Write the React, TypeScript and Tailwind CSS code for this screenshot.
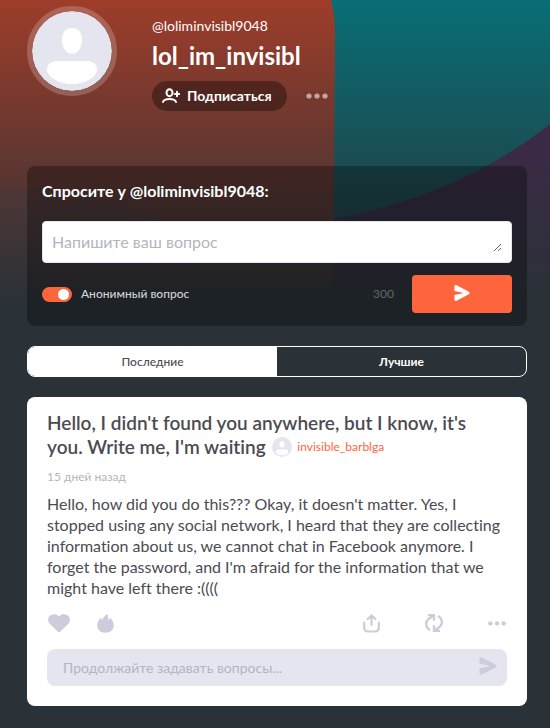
import React, { useState } from "react";

function Avatar({ className }: { className: string }) {
  return (
    <svg viewBox="0 0 80 80" className={className} aria-hidden="true">
      <circle cx="40" cy="40" r="40" fill="#e5e5ef" />
      <path
        d="M40 17c6.500 0 10 4.500 10 12 0 8-5 14-10 14s-10-6-10-14c0-7.500 3.500-12 10-12Z"
        fill="#fff"
      />
      <path
        d="M25 50h30c6 0 10 4 10 8.500C65 66 53 73 40 73S15 66 15 58.500C15 54 19 50 25 50Z"
        fill="#fff"
      />
    </svg>
  );
}

function PlaneIcon({ className }: { className: string }) {
  return (
    <svg viewBox="0 0 18 18" className={className} aria-hidden="true" fill="currentColor">
      <path d="M3 .4 16.300 7.400c1.700.9 1.700 2.300 0 3.200L3 17.600C1.500 18.300.5 17.600.5 16.200v-4.900L10 9.400v-.8L.5 6.700V1.800C.5.400 1.500-.300 3 .4Z" />
    </svg>
  );
}

function Dots({ className }: { className: string }) {
  return (
    <svg viewBox="0 0 22 6" className={className} aria-hidden="true" fill="currentColor">
      <circle cx="3" cy="3" r="2.600" />
      <circle cx="11" cy="3" r="2.600" />
      <circle cx="19" cy="3" r="2.600" />
    </svg>
  );
}

function Backdrop() {
  return (
    <svg
      viewBox="0 0 550 300"
      preserveAspectRatio="none"
      className="absolute inset-x-0 top-0 -z-10 h-[300px] w-full"
      aria-hidden="true"
    >
      <defs>
        <linearGradient id="fade" x1="0" y1="0" x2="0" y2="1">
          <stop offset="0" stopColor="#2a3137" stopOpacity="0" />
          <stop offset="1" stopColor="#2a3137" />
        </linearGradient>
      </defs>
      <rect width="550" height="300" fill="#4a2352" />
      <path d="M325 0h225v124C490 172 410 207 325 220Z" fill="#096e75" />
      <path d="M0 0h331q4 15 4 34L333 300H0Z" fill="#9e3d2a" />
      <path d="M0 187C70 187 140 200 200 245V300H0Z" fill="#6b4a4c" fillOpacity="0.3" />
      <rect width="550" height="300" fill="url(#fade)" />
    </svg>
  );
}

export default function App() {
  const [tab, setTab] = useState("latest");
  const tabOn = "bg-white text-[#4b4b52] font-medium";
  const tabOff = "text-white font-bold";
  return (
    <div className="relative isolate min-h-screen bg-[#2a3137] pr-[23px] pb-[22px] pl-[27px] pt-1.5 font-['Lato','Noto_Sans',sans-serif] [font-variant-ligatures:none]">
      <Backdrop />
      <header className="flex h-40 items-start gap-[35px]">
        <Avatar className="size-[90px] rounded-full border-5 border-white/20" />
        <div className="pt-3">
          <p className="text-sm leading-4 text-white">@loliminvisibl9048</p>
          <h1 className="mt-2 text-2xl leading-7 font-bold text-white">lol_im_invisibl</h1>
          <div className="mt-[11px] flex items-center gap-[19px]">
            <button className="flex h-[30px] items-center gap-[7px] rounded-full bg-black/35 pr-[15px] pl-2.5 text-sm font-bold text-white">
              <svg
                viewBox="0 0 18 16"
                className="h-4 w-[18px]"
                fill="none"
                stroke="currentColor"
                strokeWidth="2"
                strokeLinecap="round"
                aria-hidden="true"
              >
                <ellipse cx="7.500" cy="4.700" rx="3" ry="3.500" />
                <path d="M1 14c.8-2.200 3-3 6.500-3s5.700.8 6.500 3M12.800 6h4.400M15 3.800v4.400" />
              </svg>
              Подписаться
            </button>
            <button aria-label="Ещё" className="text-white/55">
              <Dots className="h-1.5 w-[22px]" />
            </button>
          </div>
        </div>
      </header>

      <main>
        <form
          className="rounded-lg bg-black/30 px-[15px] pt-[15px] pb-[13px]"
          onSubmit={(e) => e.preventDefault()}
        >
          <label htmlFor="question" className="block text-base leading-5 font-bold text-white">
            Спросите у @loliminvisibl9048:
          </label>
          <div className="mt-5 rounded border border-[#e5e5ef] bg-white px-[9px] py-2.5">
            <textarea
              id="question"
              rows={1}
              placeholder="Напишите ваш вопрос"
              className="block h-5 w-full resize-y overflow-hidden bg-white text-base leading-5 text-[#4b4b52] outline-none placeholder:text-[#b4b4be]"
            />
          </div>
          <div className="mt-3 flex items-center">
            <label className="flex items-center gap-[9px] text-xs font-medium text-[#d0d2d3]">
              <input type="checkbox" defaultChecked className="peer sr-only" />
              <span className="flex h-[15px] w-[30px] items-center rounded-full bg-gray-500 px-[3px] peer-checked:justify-end peer-checked:bg-[#ff653c]">
                <span className="size-[11px] rounded-full bg-white" />
              </span>
              Анонимный вопрос
            </label>
            <span className="mr-[18px] ml-auto text-xs text-[#636769]">300</span>
            <button
              aria-label="Отправить"
              className="flex h-[38px] w-[100px] items-center justify-center rounded bg-[#ff653c] pb-0.5 text-white"
            >
              <PlaneIcon className="size-4" />
            </button>
          </div>
        </form>

        <div role="tablist" className="mt-5 flex h-[31px] overflow-hidden rounded-lg border border-white text-xs">
          <button
            role="tab"
            aria-selected={tab === "latest"}
            onClick={() => setTab("latest")}
            className={`flex-1 ${tab === "latest" ? tabOn : tabOff}`}
          >
            Последние
          </button>
          <button
            role="tab"
            aria-selected={tab === "best"}
            onClick={() => setTab("best")}
            className={`flex-1 ${tab === "best" ? tabOn : tabOff}`}
          >
            Лучшие
          </button>
        </div>

        <article className="mt-5 rounded-lg bg-white px-5 pt-3.5 pb-5 text-[#4b4b52]">
          <h2 className="pr-6 text-[19px] leading-6 font-semibold">
            Hello, I didn't found you anywhere, but I know, it's you. Write me, I'm waiting{" "}
            <a
              href="#author"
              className="ml-0.5 inline-flex h-6 items-center gap-[5px] align-bottom text-xs font-normal text-[#ff653c]"
            >
              <Avatar className="size-5" />
              invisible_barblga
            </a>
          </h2>
          <time className="mt-2.5 block text-xs leading-4 text-[#b4b4be]">15 дней назад</time>
          <p className="mt-2 text-base leading-[21px]">
            Hello, how did you do this??? Okay, it doesn't matter. Yes, I stopped using any social network, I
            heard that they are collecting information about us, we cannot chat in Facebook anymore. I forget
            the password, and I'm afraid for the information that we might have left there :((((
          </p>
          <div className="mt-[15px] flex h-5 items-center text-[#cdccda]">
            <button aria-label="Нравится" className="ml-px">
              <svg viewBox="0 0 22 18" className="h-[18px] w-[22px]" fill="currentColor" aria-hidden="true">
                <path d="M11 2.200C14-.8 18.500-.300 20.800 2.300c1.800 2.500 1.300 5.600-.7 7.700l-7.800 7.500q-1.300 1-2.600 0L1.900 10C-.100 7.900-.600 4.800 1.200 2.300 3.500-.300 8-.8 11 2.200Z" />
              </svg>
            </button>
            <button aria-label="Огонь" className="ml-[27px]">
              <svg viewBox="0 0 17 19" className="h-[19px] w-[17px]" fill="currentColor" aria-hidden="true">
                <path d="M10.300.3c.8.2.9 3.500 1.200 6.100l1-1.900c.4-.8 1-.8 1.500 0 1.500 1.900 2.800 4.300 2.800 6.700 0 4.500-3.300 7.500-8.300 7.500S.200 15.700.200 11.200C.200 8.500 1.500 6.300 2.800 4.500c.5-.8 1.100-.8 1.500 0l.8 1.700C5.900 3.600 7.800 1.400 10.300.3Z" />
              </svg>
            </button>
            <button aria-label="Поделиться" className="ml-auto">
              <svg viewBox="0 0 17 19" className="h-[19px] w-[17px]" fill="none" stroke="currentColor" strokeWidth="2.200" strokeLinecap="round" aria-hidden="true">
                <path d="M8.500 11V2M4.800 5l3.700-3.500L12.200 5M1.200 8.500v5c0 2.700 1.300 4 4 4h6.600c2.700 0 4-1.300 4-4v-5" />
              </svg>
            </button>
            <button aria-label="Повторить" className="ml-[45px]">
              <svg viewBox="0 0 18 18" className="h-[18px] w-[18px]" fill="none" stroke="currentColor" strokeWidth="2.300" aria-hidden="true">
                <path d="M5 16C.200 13.500 0 8 3.500 5L8.300 1.800M3 1.200h6v5.500M13 2c4.800 2.500 5 8 1.500 11L9.700 16.200M15 16.800H9v-5.500" />
              </svg>
            </button>
            <button aria-label="Ещё" className="ml-11">
              <Dots className="h-[5px] w-5" />
            </button>
          </div>
          <div className="mt-4 flex h-[37px] items-center rounded-lg bg-[#e5e5ef] pr-2.5 pl-4">
            <input
              aria-label="Продолжайте задавать вопросы"
              placeholder="Продолжайте задавать вопросы..."
              className="min-w-0 flex-1 bg-transparent text-sm outline-none placeholder:text-[#b4b4be]"
            />
            <button aria-label="Отправить вопрос" className="pb-1 text-[#cdccda]">
              <PlaneIcon className="size-[18px]" />
            </button>
          </div>
        </article>
      </main>
    </div>
  );
}
